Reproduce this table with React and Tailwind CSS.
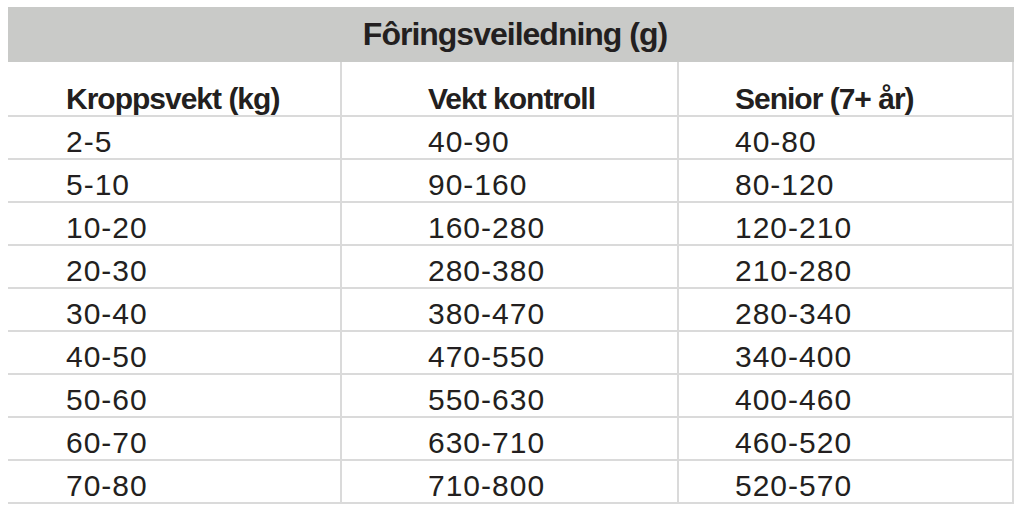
import React from 'react';

const rows = [
  ['2-5', '40-90', '40-80'],
  ['5-10', '90-160', '80-120'],
  ['10-20', '160-280', '120-210'],
  ['20-30', '280-380', '210-280'],
  ['30-40', '380-470', '280-340'],
  ['40-50', '470-550', '340-400'],
  ['50-60', '550-630', '400-460'],
  ['60-70', '630-710', '460-520'],
  ['70-80', '710-800', '520-570'],
];

const font = { fontFamily: '"Liberation Sans", Arial, sans-serif' };

// left padding of each column, matches where text starts in the picture
const pads = ['pl-[58px]', 'pl-[86px]', 'pl-[56px]'];

const App = () => {
  return (
    <div className="w-[1024px] h-[512px] bg-white pt-[7px] pl-[8px] text-[#231f20]" style={font}>
      <div className="w-[1006px]">
        <div className="h-[55px] bg-[#c9cac8] flex items-center justify-center pl-[8px] pb-[1px]">
          <span className="text-[32px] font-bold leading-none tracking-[-1px]">Fôringsveiledning (g)</span>
        </div>

        <div className="grid grid-cols-[334px_337px_335px]">
          {['Kroppsvekt (kg)', 'Vekt kontroll', 'Senior (7+ år)'].map((h, i) => (
            <div key={h} className={`h-[55px] border-b-2 border-r-2 border-[#dadada] flex items-end pb-[1px] ${pads[i]}`}>
              <span className="text-[30px] font-bold leading-none tracking-[-1px]">{h}</span>
            </div>
          ))}

          {rows.map((r, i) => (
            <React.Fragment key={i}>
              {r.map((v, j) => (
                <div key={j} className={`h-[43px] border-b-2 border-r-2 border-[#dadada] flex items-center pt-[8px] ${pads[j]}`}>
                  <span className="text-[30px] leading-none tracking-[1px]">{v}</span>
                </div>
              ))}
            </React.Fragment>
          ))}
        </div>
      </div>
    </div>
  );
};

export default App;
